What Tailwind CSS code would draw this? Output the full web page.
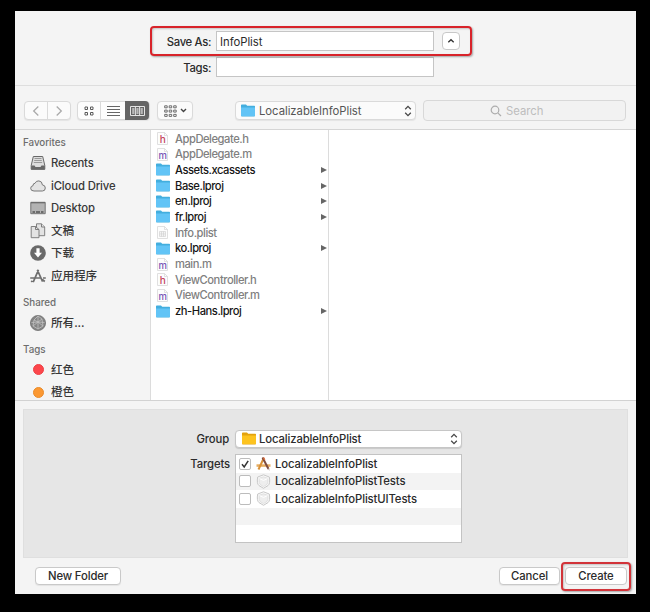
<!DOCTYPE html>
<html lang="en">
<head>
<meta charset="utf-8">
<title>Save As</title>
<script src="https://cdn.jsdelivr.net/npm/@tailwindcss/browser@4"></script>
</head>
<body class="w-[650px] h-[612px] overflow-hidden bg-black pl-[15px] pt-[11px] font-['Inter','Noto_Sans_CJK_SC',sans-serif] text-[11.3px] tracking-[-0.03px] leading-[16px] text-[#2b2b2b]">
<svg class="hidden">
  <symbol id="folder" viewBox="0 0 14 13" preserveAspectRatio="none"><path d="M0 1.2Q0 .4.8.4H5L6.200 1.800H13.300Q14 1.800 14 2.500V11.600Q14 12.500 13.200 12.500H.8Q0 12.500 0 11.600Z" fill="#43aede"/><path d="M0 3.400H14V11.400Q14 12 13.200 12H.8Q0 12 0 11.400Z" fill="#62c4f6"/></symbol>
  <symbol id="yfolder" viewBox="0 0 14 13" preserveAspectRatio="none"><path d="M0 1.200Q0 .4.8.4H5L6.200 1.800H13.300Q14 1.800 14 2.500V11.600Q14 12.500 13.200 12.500H.8Q0 12.500 0 11.600Z" fill="#e3a20e"/><path d="M0 3.400H14V11.400Q14 12 13.200 12H.8Q0 12 0 11.400Z" fill="#fdc31f"/></symbol>
  <symbol id="page" viewBox="0 0 11 13"><path d="M.5.5H7.500L10.500 3.500V12.500H.5Z" fill="#fdfdfd" stroke="#d8d8d8" stroke-width=".8"/><path d="M7.500.5V3.500H10.500" fill="none" stroke="#d6d6d6" stroke-width=".7"/></symbol>
  <symbol id="shield" viewBox="0 0 15 15"><path d="M7.500.8 13.300 3Q14.500 9.500 12 11.600L7.500 14.300 3 11.600Q.5 9.500 1.700 3Z" fill="#fafafa" stroke="#c8c8c8"/><path d="M7.500 2.800 11.900 4.300Q12.500 9 10.800 10.600L7.500 12.600 4.200 10.600Q2.500 9 3.100 4.300Z" fill="#eee" stroke="#d3d3d3" stroke-width=".6"/><path d="M3.500 4.600 7.500 6.500 11.500 4.600" fill="none" stroke="#fff"/></symbol>
  <symbol id="updown" viewBox="0 0 8 12"><path d="M1.200 4.200 4 1.400 6.800 4.200M1.200 7.800 4 10.600 6.800 7.800" fill="none" stroke="#484848" stroke-width="1.300"/></symbol>
</svg>

<main class="w-[621px] h-[583px] bg-[#f4f4f4] flex flex-col">
  <!-- Name and tags -->
  <header class="h-[75px] shrink-0 border-b border-[#dedede] relative pt-5">
    <div class="flex h-5 items-center">
      <label class="w-[197px] text-right pr-px pt-[2px] font-medium tracking-[-0.35px]">Save As:</label>
      <div class="ml-[4px] w-[218px] h-[20px] bg-white border border-[#c5c5c5] pl-[3px] leading-[20px]">InfoPlist</div>
      <button class="ml-2 w-[18px] h-[18px] rounded-[4px] bg-white border border-[#c8c8c8] flex items-center justify-center"><svg width="8" height="6" viewBox="0 0 8 6" fill="none"><path d="M1.300 4.300 4 1.700 6.700 4.300" stroke="#333" stroke-width="1.300"/></svg></button>
    </div>
    <div class="flex h-5 items-center mt-[6px]">
      <label class="w-[197px] text-right pr-px pt-[2px] font-medium tracking-[-0.35px]">Tags:</label>
      <div class="ml-[4px] w-[218px] h-[20px] bg-white border border-[#c5c5c5]"></div>
    </div>
    <div class="absolute left-[135px] top-[15px] w-[322px] h-[30px] rounded-[4px] border-2 border-[#d8232a] shadow-[1px_1px_2px_#0005,inset_1px_1px_2px_#0003]"></div>
  </header>

  <!-- Toolbar -->
  <nav class="h-[44px] shrink-0 border-b border-[#d5d5d5] flex items-center pl-[9px] pt-[6px]">
    <div class="flex w-[47px] h-[19px] rounded-[4px] bg-[#fbfbfb] border border-[#dadada] shadow-[0_1px_1px_#0001]">
      <div class="w-[23px] border-r border-[#dadada] flex items-center justify-center"><svg width="8" height="12" viewBox="0 0 8 12" fill="none" stroke="#aaa" stroke-width="1.300"><path d="M6.300 1.500 1.700 6 6.300 10.500"/></svg></div>
      <div class="flex-1 flex items-center justify-center"><svg width="8" height="12" viewBox="0 0 8 12" fill="none" stroke="#aaa" stroke-width="1.300"><path d="M1.700 1.500 6.300 6 1.700 10.500"/></svg></div>
    </div>
    <div class="ml-[6px] flex w-[73px] h-[19px] rounded-[4px] bg-[#fdfdfd] border border-[#dadada] shadow-[0_1px_1px_#0001]">
      <div class="w-[23px] border-r border-[#dadada] flex items-center justify-center"><svg width="10" height="10" viewBox="0 0 10 10" fill="none" stroke="#5a5a5a"><path d="M1 1H3.500V3.500H1ZM6.500 1H9V3.500H6.500ZM1 6.500H3.500V9H1ZM6.500 6.500H9V9H6.500Z"/></svg></div>
      <div class="w-[25px] flex items-center justify-center"><svg width="13" height="10" viewBox="0 0 13 10" stroke="#666"><path d="M0 .5H13M0 3.500H13M0 6.500H13M0 9.500H13"/></svg></div>
      <div class="w-[24px] h-[19px] -mt-px bg-[#656565] rounded-r-[4px] flex items-center justify-center"><svg width="15" height="10" viewBox="0 0 15 10" fill="none" stroke="#e5e5e5"><path d="M.5.500H14.500V9.500H.5Z"/><path d="M3.300 2V8M7.500 2V8M11.700 2V8" stroke="#b8b8b8" stroke-width="2.200"/><path d="M5.400 1V9M9.600 1V9"/></svg></div>
    </div>
    <div class="ml-[7px] w-[36px] h-[19px] rounded-[4px] bg-[#fbfbfb] border border-[#dadada] shadow-[0_1px_1px_#0001] flex items-center justify-center gap-[3px]">
      <svg width="13" height="12" viewBox="0 0 13 12" fill="none" stroke="#606060" stroke-width=".9"><path d="M.7.800H3.200V2.800H.7ZM5.200.800H7.700V2.800H5.200ZM9.700.800H12.200V2.800H9.700ZM.7 5.100H3.200V7.100H.7ZM5.200 5.100H7.700V7.100H5.200ZM9.700 5.100H12.200V7.100H9.700ZM.7 9.400H3.200V11.400H.7ZM5.200 9.400H7.700V11.400H5.200ZM9.700 9.400H12.200V11.400H9.700Z"/></svg>
      <svg width="7" height="5" viewBox="0 0 7 5" fill="none" stroke="#444" stroke-width="1.400"><path d="M1 1 3.500 3.500 6 1"/></svg>
    </div>
    <div class="ml-[42px] w-[181px] h-[19px] rounded-[4px] bg-[#fbfbfb] border border-[#dadada] shadow-[0_1px_1px_#0001] flex items-center pl-[5px] pr-[3px] text-[#555]">
      <svg class="w-[14px] h-[13px]"><use href="#folder"/></svg><span class="ml-[4px] flex-1">LocalizableInfoPlist</span><svg class="w-[8px] h-[12px]"><use href="#updown"/></svg>
    </div>
    <div class="ml-[7px] w-[203px] h-[21px] rounded-[4px] border border-[#d8d8d8] bg-[#f2f2f2] flex items-center text-[#bdbdbd] pl-[66px]">
      <svg width="12" height="12" viewBox="0 0 12 12" fill="none" stroke="#adadad" stroke-width="1.200"><circle cx="5" cy="5" r="3.800"/><path d="M7.800 7.800 11 11"/></svg><span class="ml-[4px]">Search</span>
    </div>
  </nav>

  <!-- Browser -->
  <section class="h-[270px] shrink-0 flex bg-white">
    <aside class="w-[136px] h-[270px] overflow-hidden bg-[#f4f4f4] border-r border-[#dcdcdc] pl-[8px]">
      <h2 class="h-[18px] mt-[4px] leading-[18px] text-[9.800px] text-[#6d6d6d] font-medium">Favorites</h2>
      <ul class="-mt-[0.4px] [&>li]:h-[22.6px] [&>li]:flex [&>li]:items-center [&_svg]:w-[16px] [&_svg]:h-[16px] [&_svg]:mr-[5px] [&_svg]:ml-[7px] text-[#383838] font-medium tracking-[-0.13px]">
        <li><svg viewBox="0 0 16 16"><path d="M3.300 1.500H12.700L14.800 10.500V14.300H1.200V10.500Z" fill="#ddd" stroke="#686868"/><path d="M1.200 10.500H4.500L5.500 12H10.500L11.500 10.500H14.800V14.500H1.200Z" fill="#686868"/><path d="M4.500 3.500H11.500M4.200 5.500H11.800M3.800 7.500H12.200" stroke="#888" stroke-width=".8"/></svg>Recents</li>
        <li><svg viewBox="0 0 16 16"><path d="M4 13Q.7 13 .7 10.300.7 8 3 7.700 3 5.200 5 5.300 6 2.700 8.900 2.900 12.200 3.200 12.400 6.900 15.300 7.200 15.300 10 15.300 13 12.400 13Z" fill="#e3e3e3" stroke="#777"/></svg>iCloud Drive</li>
        <li><svg viewBox="0 0 16 16"><path d="M.8 2.300H15.200V13.700H.8Z" fill="#b3b3b3" stroke="#737373"/><path d="M1 2.800H15" stroke="#666"/><path d="M2.500 12H5M6 12H10M11 12H13.500" stroke="#555" stroke-width="1.400"/></svg>Desktop</li>
        <li class="text-[11.600px]"><svg viewBox="0 0 16 16" fill="#e3e3e3" stroke="#757575" stroke-width=".9"><path d="M6.500.800H11.500L14.700 4V12.700H6.500Z"/><path d="M11.500.800V4H14.700"/><path d="M1.200 3.500H5.500L9 6.500V14.700H1.200Z"/><path d="M5.500 3.500V6.500H9" fill="none"/></svg>文稿</li>
        <li class="text-[11.600px]"><svg viewBox="0 0 16 16"><circle cx="8" cy="8" r="7.800" fill="#696969"/><path d="M6.400 3.300H9.600V7.700H12L8 12.500 4 7.700H6.400Z" fill="#fff"/></svg>下载</li>
        <li class="text-[11.600px]"><svg viewBox="0 0 16 16" fill="none" stroke="#6e6e6e" stroke-width="1.700"><path d="M3.200 14.200 8.500 1.800M7.300 1.800 12.600 13.600M.2 10H10.800M13 10H15.800M1.200 12.800 2.500 14M12.300 11.500 14.800 13.500"/></svg>应用程序</li>
      </ul>
      <h2 class="h-[18px] mt-[6.400px] leading-[18px] text-[9.800px] text-[#6d6d6d] font-medium">Shared</h2>
      <div class="h-[22px] flex items-center text-[#383838] text-[11.600px] font-medium"><svg class="w-[16px] h-[16px] ml-[7px] mr-[5px]" viewBox="0 0 16 16"><circle cx="8" cy="8" r="7.600" fill="#858585" stroke="#696969" stroke-width=".7"/><path d="M8 1 4 5 8 7 12 4ZM8 7 3 11 8 14 13 11ZM4 5 3 11M12 4 13 11M8 1V14M1.500 7.500 8 7 14.500 7.500" fill="none" stroke="#c2c2c2" stroke-width=".8"/></svg>所有...</div>
      <h2 class="h-[18px] mt-[7px] leading-[18px] text-[9.800px] text-[#6d6d6d] font-medium">Tags</h2>
      <div class="h-[22.600px] flex items-center text-[#383838] text-[11.600px] font-medium"><i class="w-[11px] h-[11px] ml-[10px] mr-[7px] rounded-full bg-[#fc464b] border border-[#ee4045]"></i>红色</div>
      <div class="h-[22px] flex items-center text-[#383838] text-[11.600px] font-medium"><i class="w-[11px] h-[11px] ml-[10px] mr-[7px] rounded-full bg-[#fb9832] border border-[#ea8b2a]"></i>橙色</div>
    </aside>
    <ul class="w-[178px] border-r border-[#dcdcdc] pt-[0.8px] pl-[5px] text-[11.2px] tracking-[-0.46px] text-[#161616] [&>li]:h-[15.680px] [&>li]:flex [&>li]:items-center [&>li]:font-medium [&_svg]:w-[14px] [&_svg]:h-[13px] [&_svg]:mr-[5px] [&_b]:ml-auto [&_b]:mr-px [&_b]:border-y-[3px] [&_b]:border-y-transparent [&_b]:border-l-[6px] [&_b]:border-l-[#666]">
      <li class="text-[#808080]"><svg viewBox="0 0 14 13"><use href="#page" x="1" width="11" height="13"/><text x="6.500" y="10.500" text-anchor="middle" font-size="10" font-weight="500" fill="#c4455d">h</text></svg>AppDelegate.h</li>
      <li class="text-[#808080]"><svg viewBox="0 0 14 13"><use href="#page" x="1" width="11" height="13"/><text x="6.500" y="10.500" text-anchor="middle" font-size="9.500" font-weight="500" fill="#7a55b5">m</text></svg>AppDelegate.m</li>
      <li><svg><use href="#folder"/></svg>Assets.xcassets<b></b></li>
      <li><svg><use href="#folder"/></svg>Base.lproj<b></b></li>
      <li><svg><use href="#folder"/></svg>en.lproj<b></b></li>
      <li><svg><use href="#folder"/></svg>fr.lproj<b></b></li>
      <li class="text-[#808080]"><svg viewBox="0 0 14 13"><use href="#page" x="1" width="11" height="13"/><path d="M3.500 5.500H9.500V10.500H3.500ZM3.500 7.200H9.500M3.500 8.900H9.500M5.500 5.500V10.500M7.500 5.500V10.500" fill="none" stroke="#ccc" stroke-width=".6"/></svg>Info.plist</li>
      <li><svg><use href="#folder"/></svg>ko.lproj<b></b></li>
      <li class="text-[#808080]"><svg viewBox="0 0 14 13"><use href="#page" x="1" width="11" height="13"/><text x="6.500" y="10.500" text-anchor="middle" font-size="9.500" font-weight="500" fill="#7a55b5">m</text></svg>main.m</li>
      <li class="text-[#808080]"><svg viewBox="0 0 14 13"><use href="#page" x="1" width="11" height="13"/><text x="6.500" y="10.500" text-anchor="middle" font-size="10" font-weight="500" fill="#c4455d">h</text></svg>ViewController.h</li>
      <li class="text-[#808080]"><svg viewBox="0 0 14 13"><use href="#page" x="1" width="11" height="13"/><text x="6.500" y="10.500" text-anchor="middle" font-size="9.500" font-weight="500" fill="#7a55b5">m</text></svg>ViewController.m</li>
      <li><svg><use href="#folder"/></svg>zh-Hans.lproj<b></b></li>
    </ul>
  </section>

  <!-- Group, targets and actions -->
  <footer class="flex-1 border-t border-[#d2d2d2] px-[8px] pt-[8px] font-medium tracking-[-0.12px]">
    <section class="h-[149px] bg-[#e6e6e6] border border-[#dfdfdf] pt-[19px]">
      <div class="flex h-[19px] items-center">
        <label class="w-[205px] text-right">Group</label>
        <div class="ml-[6px] w-[227px] h-[18px] rounded-[4px] bg-white border border-[#c6c6c6] shadow-[0_1px_1px_#0002] flex items-center pl-[6px] pr-[3px]"><svg class="w-[14px] h-[13px]"><use href="#yfolder"/></svg><span class="ml-[3px] flex-1">LocalizableInfoPlist</span><svg class="w-[8px] h-[12px]"><use href="#updown"/></svg></div>
      </div>
      <div class="flex mt-[6px]">
        <label class="w-[206px] text-right pt-[2px]">Targets</label>
        <ul class="ml-[5px] w-[227px] h-[89px] bg-white border border-[#c3c3c3] [&>li]:h-[17.500px] [&>li]:flex [&>li]:items-center [&>li]:pl-[3px] [&_i]:w-[12px] [&_i]:h-[12px] [&_i]:bg-white [&_i]:border [&_i]:border-[#bcbcbc] [&_i]:rounded-[2px] [&_i]:mr-[5px]">
          <li><i><svg width="10" height="10" viewBox="0 0 10 10" fill="none"><path d="M2 5.300 4.200 8 8.200 1.800" stroke="#333" stroke-width="1.500"/></svg></i><svg class="mr-[4px]" width="15" height="15" viewBox="0 0 15 15" fill="none"><path d="M.5 8.300H14.500V10.800H.5Z" fill="#e5ad62"/><path d="M2.500 13.500 7.800 2" stroke="#d99238" stroke-width="2"/><path d="M6.500 1.500 12.500 13" stroke="#7b4b40" stroke-width="2"/><path d="M7.500 1.500 8.700 4" stroke="#d96c3d" stroke-width="1.500"/><path d="M12.300 12.500 13.300 14.300" stroke="#b9a7a3"/></svg>LocalizableInfoPlist</li>
          <li class="bg-[#f3f3f3]"><i></i><svg class="w-[15px] h-[15px] mr-[4px]"><use href="#shield"/></svg>LocalizableInfoPlistTests</li>
          <li><i></i><svg class="w-[15px] h-[15px] mr-[4px]"><use href="#shield"/></svg>LocalizableInfoPlistUITests</li>
          <li class="bg-[#f3f3f3]"></li>
        </ul>
      </div>
    </section>
    <div class="flex pt-[9px] pl-[12px] pr-px [&>button]:h-[18px] [&>button]:bg-white [&>button]:border [&>button]:border-[#c9c9c9] [&>button]:rounded-[4px] [&>button]:leading-[16px] [&>button]:shadow-[0_1px_1px_#0001]">
      <button class="w-[86px]">New Folder</button>
      <button class="w-[61px] ml-auto mr-[5px]">Cancel</button>
      <div class="relative"><button class="w-[62px] h-[18px] bg-white border border-[#c9c9c9] rounded-[4px] leading-[16px]">Create</button><div class="absolute -left-[4px] -top-[5px] w-[70px] h-[29px] rounded-[4px] border-2 border-[#d2343a] shadow-[1px_1px_2px_#0005,inset_1px_1px_2px_#0003]"></div></div>
    </div>
  </footer>
</main>
</body>
</html>
